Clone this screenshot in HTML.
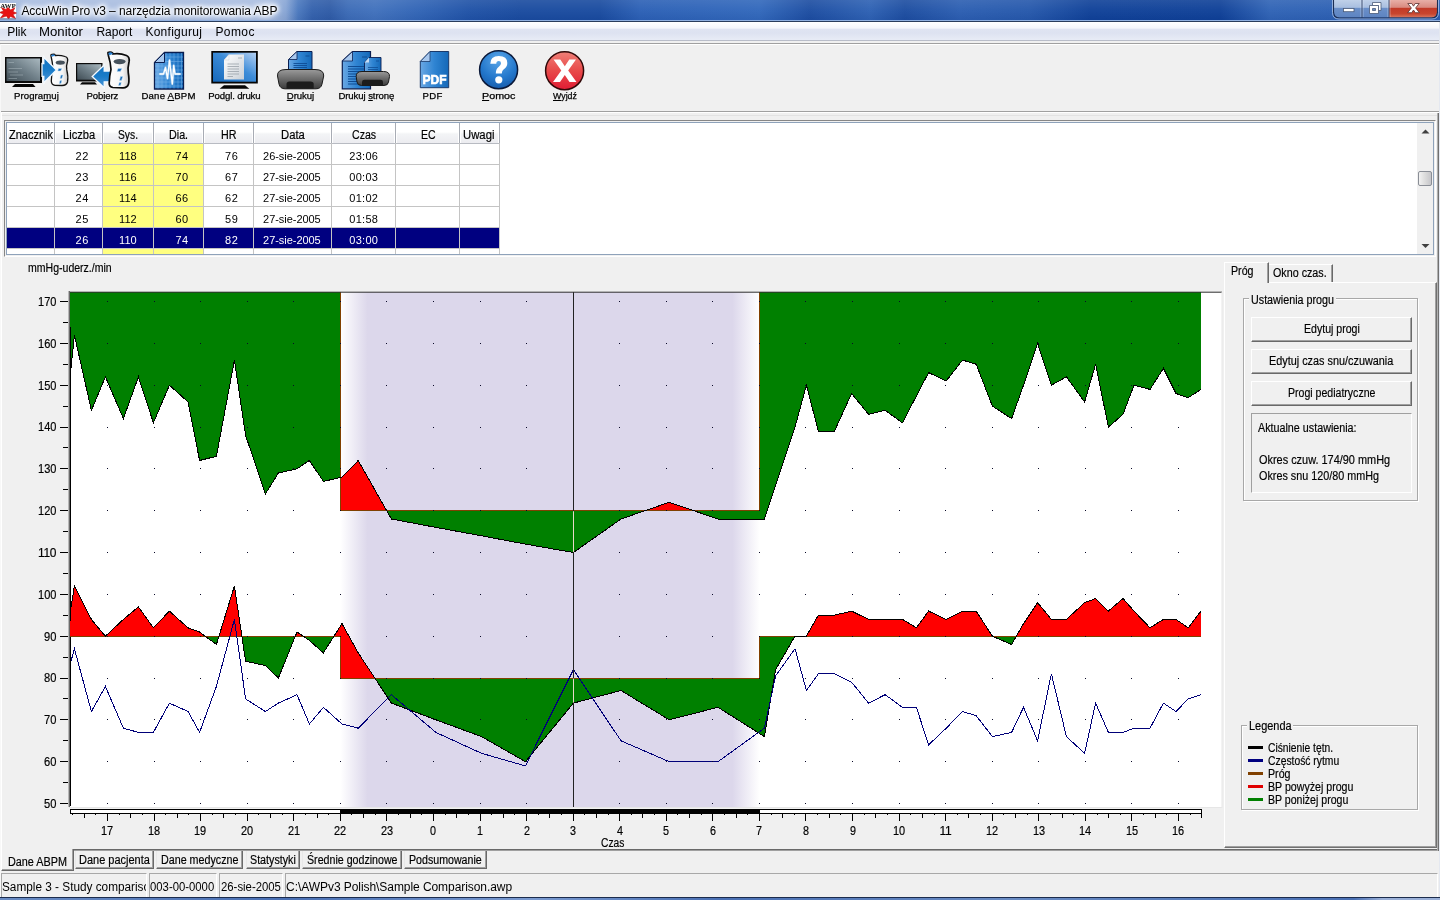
<!DOCTYPE html>
<html lang="pl"><head><meta charset="utf-8"><title>AccuWin Pro v3</title>
<style>
html,body{margin:0;padding:0}
body{width:1440px;height:900px;overflow:hidden;background:#f0f0f0;position:relative;font-family:"Liberation Sans",sans-serif;font-size:12px;color:#000}
.a{position:absolute;box-sizing:border-box}
.t{position:absolute;white-space:pre;display:block;transform-origin:0 0}
.t u{text-decoration:underline;text-underline-offset:1px}
#title{left:0;top:0;width:1440px;height:22px;background:
 linear-gradient(180deg,rgba(255,255,255,.10) 0,rgba(255,255,255,.04) 45%,rgba(0,0,40,.05) 100%),
 linear-gradient(90deg,#9db4da 0,#a9bde0 30px,#a9bde0 268px,#86a4d4 286px,#4a78be 298px,#3260ac 312px,#2d5aa6 330px,#3a6ab6 348px,#3f70bc 375px,#2f63b5 420px,#1e51a6 470px,#184a9f 520px,#184a9f 600px,#2a5fb5 640px,#3067bb 760px,#1b4ca1 810px,#2c60b3 870px,#1b4ca0 905px,#2a5db1 960px,#2457ab 1030px,#0e4098 1090px,#0d3f97 1220px,#2e62b5 1270px,#2b5fb3 1334px,#2a5db0 1440px)}
#title:after{content:"";position:absolute;left:0;top:20px;width:1440px;height:1px;background:#8fb0e0}
#title:before{content:"";position:absolute;left:0;top:21px;width:1440px;height:1px;background:#2a3d5c;z-index:2}
#menu{left:0;top:22px;width:1440px;height:18px;background:linear-gradient(180deg,#ffffff 0,#f4f6fb 6px,#dfe4f2 7.5px,#dde2f1 11px,#e8ecf6 18px)}
.hl{left:0;width:1440px;height:1px}
/* table */
#grid{left:6px;top:122px;width:1428px;height:133px;background:#fff;border:1px solid #8ea2ba}
.hc{top:123px;height:21px;background:linear-gradient(180deg,#ffffff 0,#ffffff 45%,#f3f4f6 55%,#ececf0 100%);border-right:1px solid #a8acb4;border-bottom:1px solid #b8bbc2;box-shadow:inset -1px 0 0 #fff, inset 1px 0 0 #fff}
.vl{width:1px;background:#c4c4c4;top:143px;height:111px}
.hline{height:1px;background:#c4c4c4;left:7px;width:493px}
.yl{background:#ffff80}
/* classic 3D */
.btn{background:#f0f0f0;border:1px solid;border-color:#fff #696969 #696969 #fff;box-shadow:inset -1px -1px 0 #a0a0a0}
.tabb{background:#f0f0f0;border:1px solid;border-color:#e3e3e3 #696969 #696969 #e3e3e3;box-shadow:inset 1px 1px 0 #fff, inset -1px -1px 0 #a0a0a0}
.grp{border:1px solid #a8a8a8;box-shadow:inset 1px 1px 0 #fff, 1px 1px 0 #fff}
.sunk{border:1px solid;border-color:#a0a0a0 #fff #fff #a0a0a0}
.sbp{top:873px;height:25px;border:1px solid;border-color:#a8a8a8 #fff #fff #a8a8a8}
</style></head><body>
<!-- title bar -->
<div id="title" class="a"></div>
<svg class="a" style="left:0;top:2px;will-change:transform" width="17" height="18" viewBox="0 0 17 18"><rect x="0" y="1" width="16" height="15.5" fill="#fff"/>
<path d="M8 5 L10.500 8 L15 5.500 L13 9.500 L16.500 11 L13 12.500 L15.500 16.500 L10.500 14.500 L8.500 17 L6.500 14 L0.500 16 L3.500 12 L-0.500 10.500 L3.500 9 L1 5 L6 7.500 Z" fill="#e81212" stroke="#c01010" stroke-width=".6"/>
<rect x="0" y="1" width="16" height="4.500" fill="#fff" opacity=".8"/>
<text x="0.200" y="6.400" font-family="Liberation Serif,serif" font-size="7" font-weight="700" fill="#111" textLength="15.600" lengthAdjust="spacingAndGlyphs">AWP</text>
<rect x="0" y="16.500" width="16" height="0.800" fill="#56688a"/></svg>
<svg class="a" style="left:1332px;top:0" width="108" height="20" viewBox="0 0 108 20">
<defs><linearGradient id="wc1" x1="0" y1="0" x2="0" y2="1"><stop offset="0" stop-color="#c3d3ea"/><stop offset=".45" stop-color="#a9bfe0"/><stop offset=".5" stop-color="#6b8fc8"/><stop offset="1" stop-color="#5d84c2"/></linearGradient>
<linearGradient id="wc2" x1="0" y1="0" x2="0" y2="1"><stop offset="0" stop-color="#eab4ac"/><stop offset=".45" stop-color="#d98a80"/><stop offset=".5" stop-color="#c23a28"/><stop offset=".8" stop-color="#c8452e"/><stop offset="1" stop-color="#d87860"/></linearGradient></defs>
<path d="M2 -1 V12 Q2 17.5 7.5 17.5 H57 V-1 Z" fill="url(#wc1)"/>
<path d="M57 -1 V17.5 H99.500 Q105 17.500 105 12 V-1 Z" fill="url(#wc2)"/>
<path d="M1.500 -1 V12 Q1.500 18 7.500 18 H99.500 Q105.500 18 105.500 12 V-1" fill="none" stroke="#1b2d52" stroke-width="1.100"/>
<path d="M0.500 -1 V12.500 Q0.500 19 7 19 H100 Q106.500 19 106.500 12.500 V-1" fill="none" stroke="#b9cdec" stroke-width="0.900" opacity=".8"/>
<path d="M30 0 V17.500 M57 0 V17.500" stroke="#1b2d52" stroke-width="1"/><path d="M31 0 V17 M58 0 V17 M29 0 V17 M56 0 V17" stroke="#dfe8f6" stroke-width="0.600" opacity=".7"/>
<rect x="11.500" y="8.500" width="10.500" height="3.200" fill="#fff" stroke="#4a5a78" stroke-width=".8"/>
<path d="M40.500 2.500 H49 V10.500 H46.500 V5.500 H40.500 Z" fill="#fff" stroke="#4a5a78" stroke-width=".8"/><path d="M37.500 5.500 H46.500 V13.500 H37.500 Z M40.500 8.500 V10.500 H43.500 V8.500 Z" fill="#fff" fill-rule="evenodd" stroke="#4a5a78" stroke-width=".8"/>
<path d="M75.800 3.500 L79.800 3.500 L81.500 6.200 L83.200 3.500 L87.200 3.500 L83.600 8 L87.400 12.700 L83.300 12.700 L81.500 10 L79.700 12.700 L75.600 12.700 L79.400 8 Z" fill="#fff" stroke="#5a3030" stroke-width=".8"/>
</svg>
<!-- menu -->
<div id="menu" class="a"></div>
<div class="a hl" style="top:40px;background:#b9bdc9"></div>
<div class="a hl" style="top:41px;background:#f0f0f0;height:2px"></div>
<div class="a hl" style="top:43px;background:#a0a0a0"></div>
<div class="a hl" style="top:44px;background:#fff"></div>
<!-- toolbar bottom -->
<div class="a hl" style="top:111px;background:#a0a0a0"></div>
<div class="a hl" style="top:112px;background:#fff"></div>
<svg class="a" style="left:0;top:46px;will-change:transform" width="620" height="46" viewBox="0 46 620 46">
<defs>
<linearGradient id="scr" x1="1" y1="0" x2="0" y2="1"><stop offset="0" stop-color="#a9b8bf"/><stop offset=".5" stop-color="#6f7f88"/><stop offset="1" stop-color="#3f4c54"/></linearGradient>
<linearGradient id="bl" x1="0" y1="0" x2="1" y2="0"><stop offset="0" stop-color="#6aa8e4"/><stop offset=".5" stop-color="#2f84d2"/><stop offset="1" stop-color="#1468b8"/></linearGradient>
<linearGradient id="bl2" x1="1" y1="0" x2="0" y2="1"><stop offset="0" stop-color="#b4d0f2"/><stop offset=".45" stop-color="#3d8cd8"/><stop offset="1" stop-color="#1668ba"/></linearGradient>
<linearGradient id="pr" x1="0" y1="0" x2="0" y2="1"><stop offset="0" stop-color="#9a9a9a"/><stop offset=".5" stop-color="#6a6a6a"/><stop offset="1" stop-color="#3c3c3c"/></linearGradient>
<linearGradient id="dev" x1="0" y1="0" x2="1" y2="0"><stop offset="0" stop-color="#fff"/><stop offset=".7" stop-color="#f4f4f4"/><stop offset="1" stop-color="#c8c8c8"/></linearGradient>
<linearGradient id="doc" x1="0" y1="0" x2="1" y2="1"><stop offset="0" stop-color="#fff"/><stop offset="1" stop-color="#c9cfd6"/></linearGradient>
<radialGradient id="hb" cx=".5" cy=".25" r=".8"><stop offset="0" stop-color="#5aa6e8"/><stop offset=".6" stop-color="#2478cc"/><stop offset="1" stop-color="#1558a8"/></radialGradient>
<linearGradient id="rd" x1="0" y1="0" x2="0" y2="1"><stop offset="0" stop-color="#f08078"/><stop offset=".5" stop-color="#e84a4a"/><stop offset="1" stop-color="#e01c34"/></linearGradient>
<linearGradient id="arr" x1="0" y1="0" x2="0" y2="1"><stop offset="0" stop-color="#1272c0"/><stop offset=".5" stop-color="#1a7cc8"/><stop offset="1" stop-color="#4a94d8"/></linearGradient>
</defs>
<!-- 1 Programuj -->
<rect x="5" y="57" width="37" height="26" fill="#0a0a0a"/><rect x="6.500" y="58.500" width="33.500" height="22.500" fill="url(#scr)"/>
<g stroke="#b8c4ca" stroke-width=".7" opacity=".6"><path d="M8.500 62.500 H14 M8.500 68.500 H22 M8.500 72 H18 M10 75 H23 M8.500 78.500 H17"/></g>
<path d="M12 87 L15 84 H33 L35.500 87 Z" fill="#050505"/>
<path d="M51 56 Q50.500 54.500 52 54.300 L54 54.200 Q55 54.300 55.300 55.500 Q60 54.800 65 56.500 Q68.500 57.500 67.500 61.500 Q66 66 66.800 70 Q68.500 77 67.500 82 Q66.500 85.500 62 85.500 L55 85.300 Q51.500 85 51.300 81 Q51.500 74 53 69 Q52.500 62 51 56 Z" fill="url(#dev)" stroke="#111" stroke-width="1.300"/>
<path d="M51.300 56 Q51 54.700 52.200 54.500 L54 54.400 Q55 54.600 55.200 55.600 L52 56.800 Z" fill="#2c84d6"/>
<ellipse cx="60.300" cy="62.600" rx="4.600" ry="2.200" fill="#46525c"/>
<path d="M58.500 68.500 H62 L60.500 71 H57.800 Z M61 75 H63 L61.800 78.500 H60 Z M60 80.500 H61.800 L61 83.500 H59.300 Z" fill="#1c6cb4" stroke="#bfe0fa" stroke-width=".5"/>
<path d="M42 63.500 H43.800 V57.200 L56.400 70 L43.800 82.800 V76.300 H42 Z" fill="url(#arr)" stroke="#f4faff" stroke-width="1.300" stroke-linejoin="miter"/><path d="M43.300 55.800 L44.600 57 M43.300 84.300 L44.600 83" stroke="#fff" stroke-width=".7"/>
<!-- 2 Pobierz -->
<rect x="76" y="63" width="26.500" height="18.500" fill="#0a0a0a"/><rect x="77.200" y="64.200" width="24" height="15.500" fill="url(#scr)"/>
<path d="M80 84.500 L82 82.300 H95 L97 84.500 Z" fill="#050505"/>
<path d="M111 71 H104.200 V65 L92.200 76.600 L104.200 87.800 V81.800 H111 Z" fill="url(#arr)" stroke="#f4faff" stroke-width="1.300"/>
<path d="M108 52.500 Q109.500 51.800 111.500 52.300 Q113 52.800 113 54 Q120 53 126.500 55.500 Q130 57 129 62 Q127.500 68 128.300 73 Q129.500 80 128.500 84 Q127.500 87.800 123 87.800 L113 87.500 Q109 87 109.200 83 Q109.500 75 111 69.500 Q110.500 62 108.500 56 Q107.800 53.500 108 52.500 Z" fill="url(#dev)" stroke="#0a0a0a" stroke-width="1.700"/>
<path d="M108.300 53 Q109.500 52 111.500 52.500 Q112.800 53 112.800 54 L109 55.500 Z" fill="#2c84d6"/>
<ellipse cx="119.600" cy="61.600" rx="6" ry="2.700" fill="#46525c"/>
<path d="M118 68.500 H122 L120.300 71.500 H117 Z M120.500 76.500 H122.800 L121.500 80.500 H119.500 Z M119.300 82.500 H121.300 L120.500 85.500 H118.500 Z" fill="#1c6cb4" stroke="#bfe0fa" stroke-width=".5"/>
<!-- 3 Dane ABPM -->
<path d="M164.500 52.500 H183.500 V89 H154.500 V62.500 Z" fill="url(#bl)" stroke="#0a1e50" stroke-width="1.300"/>
<g stroke="#8cc0f0" stroke-width=".6" opacity=".7"><path d="M158 63 V88.500 M162 59 V88.500 M166 53 V88.500 M170 53 V88.500 M174 53 V88.500 M178 53 V88.500 M181.500 53 V88.500 M155 66 H183 M155 70 H183 M155 74 H183 M155 78 H183 M155 82 H183 M155 86 H183 M164 57 H183 M160 61.500 H183"/></g>
<path d="M164.500 52.500 V62.500 H154.500 Z" fill="#a8c8ee" stroke="#0a1e50" stroke-width="1"/>
<path d="M160 74 H163.500 L165.500 67.500 L167.500 78.500 L169.500 60.200 L172.300 84 L173.700 65.500 L175 74 H180" fill="none" stroke="#dff2ff" stroke-width="2.400" stroke-linejoin="round" stroke-linecap="round" opacity=".45"/><path d="M160 74 H163.500 L165.500 67.500 L167.500 78.500 L169.500 60.200 L172.300 84 L173.700 65.500 L175 74 H180" fill="none" stroke="#fff" stroke-width="1.300" stroke-linejoin="round" stroke-linecap="round"/>
<!-- 4 Podgl druku -->
<rect x="211.300" y="51" width="46.500" height="32.500" fill="#050505"/><rect x="213" y="52.700" width="43" height="29" fill="url(#bl2)"/>
<path d="M229 54.500 H244 V79.500 H224 V60 Z" fill="url(#doc)"/><path d="M229 54.500 V60 H224 Z" fill="#f4f6f8" stroke="#c0c6cc" stroke-width=".4"/>
<g stroke="#9aa2aa" stroke-width=".8"><path d="M227.500 64 H239 M227.500 66.500 H239 M227.500 69 H239 M227.500 71.500 H239 M227.500 74 H239 M227.500 76.500 H233 M238 58 H242"/></g>
<path d="M219.600 88.800 L224 85.300 H245 L249.300 88.800 Z" fill="#050505"/>
<!-- 5 Drukuj -->
<path d="M297 51.500 H312 V71 H288.500 V59.500 Z" fill="url(#bl)" stroke="#0a1e50" stroke-width="1"/><path d="M297 51.500 V59.500 H288.500 Z" fill="#a8c8ee" stroke="#0a1e50" stroke-width=".8"/>
<g stroke="#0f4c94" stroke-width=".9"><path d="M293.500 63.500 H307 M293.500 65.500 H307 M293.500 67.500 H307 M305.500 56 H309.500"/></g>
<path d="M277.500 76 Q277 69.500 286 69.500 H315 Q324 69.500 323.700 76 L322 84 Q321 88.800 316 88.800 H285 Q280 88.800 279 84 Z" fill="url(#pr)" stroke="#1a1a1a" stroke-width="1"/>
<path d="M286.500 88.800 V84 Q286.500 81.500 289.500 81.500 H310.500 Q313.700 81.500 313.700 84 V88.800 Z" fill="#1c1c1c"/>
<!-- 6 Drukuj strone -->
<path d="M352.500 51.500 H370.500 V88.800 H342.300 V61 Z" fill="url(#bl)" stroke="#0a1e50" stroke-width="1.200"/><path d="M352.500 51.500 V61 H342.300 Z" fill="#a8c8ee" stroke="#0a1e50" stroke-width=".8"/>
<g stroke="#0f4c94" stroke-width="1"><path d="M348 66.500 H365 M348 69 H365 M348 71.500 H365 M348 74 H365 M348 76.500 H365 M348 79 H365 M348 81.500 H365 M348 84 H362 M362 57 H367"/></g>
<path d="M369 57.500 H381 V73 H364.500 V62.500 Z" fill="url(#bl)" stroke="#0a1e50" stroke-width=".9"/><path d="M369 57.500 V62.500 H364.500 Z" fill="#c8dcf4"/>
<g stroke="#0f4c94" stroke-width=".8"><path d="M368 67.500 H378 M368 69.500 H378 M376 61 H379"/></g>
<path d="M356.200 76.500 Q356 71.500 362 71.500 H383.500 Q389.800 71.500 389.500 76.500 L388.500 82 Q388 85.500 384 85.500 H361.500 Q357.500 85.500 357 82 Z" fill="url(#pr)" stroke="#1a1a1a" stroke-width="1"/>
<path d="M362 85.500 V82 Q362 79.800 364.500 79.800 H380.500 Q383 79.800 383 82 V85.500 Z" fill="#1c1c1c"/>
<!-- 7 PDF -->
<path d="M430 51.500 H448.700 V87.700 H420.300 V61.500 Z" fill="url(#bl)" stroke="#1a3a6a" stroke-width="1"/><path d="M430 51.500 V61.500 H420.300 Z" fill="#a8c8ee" stroke="#1a3a6a" stroke-width=".8"/>
<text x="422.600" y="83.800" font-family="Liberation Sans,sans-serif" font-weight="700" font-size="13.500" fill="#fff" stroke="#fff" stroke-width=".7" textLength="24" lengthAdjust="spacingAndGlyphs">PDF</text>
<!-- 8 Pomoc -->
<circle cx="498.600" cy="69.700" r="19" fill="url(#hb)" stroke="#0a1838" stroke-width="1.500"/>
<path d="M490.300 63.800 Q490.300 56 498.800 56 Q507.300 56 507.300 63 Q507.300 67 503.800 69.300 Q501.800 70.700 501.800 73.500 H495.800 Q495.800 69 498.800 66.800 Q501 65.200 501 63.300 Q501 61 498.800 61 Q496.300 61 496.300 63.800 Z" fill="#fff"/><circle cx="498.800" cy="79.800" r="3.600" fill="#fff"/>
<!-- 9 Wyjdz -->
<circle cx="564.600" cy="70.700" r="19" fill="url(#rd)" stroke="#300808" stroke-width="1.500"/>
<path d="M553.500 59.500 H560.300 L564.800 66.300 L569.300 59.500 H576 L568.200 70.500 L576.500 82 H569.500 L564.800 75 L560 82 H553 L561.300 70.500 Z" fill="#fff"/>
</svg>
<div class="a" style="left:1px;top:115px;width:1437px;height:1px;background:#e3e3e3"></div><div class="a" style="left:0;top:44px;width:1px;height:854px;background:#f8f8f8"></div>
<!-- table -->
<div class="a" style="left:4px;top:120px;width:1432px;height:137px;border:1px solid;border-color:#868686 #fff #fff #868686"></div><div id="grid" class="a"></div>
<div class="a hc" style="left:7px;width:48px"></div>
<div class="a hc" style="left:55px;width:48px"></div>
<div class="a hc" style="left:103px;width:51px"></div>
<div class="a hc" style="left:154px;width:50px"></div>
<div class="a hc" style="left:204px;width:50px"></div>
<div class="a hc" style="left:254px;width:78px"></div>
<div class="a hc" style="left:332px;width:64px"></div>
<div class="a hc" style="left:396px;width:64px"></div>
<div class="a hc" style="left:460px;width:40px"></div>
<div class="a yl" style="left:103px;top:144px;width:50px;height:84px"></div>
<div class="a yl" style="left:103px;top:249px;width:50px;height:5px"></div>
<div class="a yl" style="left:154px;top:144px;width:49px;height:84px"></div>
<div class="a yl" style="left:154px;top:249px;width:49px;height:5px"></div>
<div class="a hline" style="top:164px"></div>
<div class="a hline" style="top:185px"></div>
<div class="a hline" style="top:206px"></div>
<div class="a hline" style="top:227px"></div>
<div class="a hline" style="top:248px"></div>
<div class="a" style="left:7px;top:228px;width:493px;height:20px;background:#000080"></div>
<div class="a vl" style="left:54px"></div>
<div class="a vl" style="left:102px"></div>
<div class="a vl" style="left:153px"></div>
<div class="a vl" style="left:203px"></div>
<div class="a vl" style="left:253px"></div>
<div class="a vl" style="left:331px"></div>
<div class="a vl" style="left:395px"></div>
<div class="a vl" style="left:459px"></div>
<div class="a vl" style="left:499px"></div>
<div class="a" style="left:1417px;top:123px;width:16px;height:131px;background:#f0f0f0"></div>
<svg class="a" style="left:1417px;top:123px" width="17" height="131" viewBox="0 0 17 131"><defs><linearGradient id="th" x1="0" x2="1"><stop offset="0" stop-color="#f4f4f4"/><stop offset=".5" stop-color="#dcdcdc"/><stop offset="1" stop-color="#c4c4c8"/></linearGradient></defs>
<path d="M4.500 10.500 L8.500 6.500 L12.500 10.500 Z" fill="#404040"/><path d="M4.500 121 L8.500 125 L12.500 121 Z" fill="#404040"/>
<rect x="1.500" y="48.500" width="13" height="14" rx="1.500" fill="url(#th)" stroke="#8a8e96" stroke-width="1"/></svg>
<!-- chart -->
<svg width="1440" height="900" viewBox="0 0 1440 900" style="position:absolute;left:0;top:0" shape-rendering="auto"><defs><clipPath id="plot"><rect x="70" y="292" width="1131.5" height="515"/></clipPath><linearGradient id="ng" x1="0" x2="1" y1="0" y2="0"><stop offset="0" stop-color="#fff"/><stop offset="0.0646" stop-color="#dcd7eb"/><stop offset="0.9354" stop-color="#dcd7eb"/><stop offset="1" stop-color="#fff"/></linearGradient></defs><rect x="69" y="292" width="1153" height="515" fill="#fff"/><rect x="69" y="807" width="1153" height="1" fill="#e6e6e6"/><rect x="340.5" y="292" width="419.0" height="515" fill="url(#ng)"/><rect x="70" y="292" width="1" height="514" fill="#000"/><clipPath id="abs"><polygon points="70.0,-100.0 1201.0,-100.0 1201.0,284.8 759.5,284.8 759.5,510.7 340.5,510.7 340.5,284.8 70.0,284.8"/></clipPath><clipPath id="bes"><polygon points="70.0,2000.0 1201.0,2000.0 1201.0,284.8 759.5,284.8 759.5,510.7 340.5,510.7 340.5,284.8 70.0,284.8"/></clipPath><g clip-path="url(#plot)" shape-rendering="crispEdges"><g clip-path="url(#abs)"><polygon points="71.0,368.4 74.4,335.0 91.4,410.3 105.4,376.8 123.4,418.6 138.4,376.8 153.4,422.8 169.4,385.2 188.0,401.9 199.6,460.5 216.4,456.3 234.4,360.1 245.6,435.4 265.4,493.9 278.4,473.0 297.0,468.8 309.4,460.5 323.4,481.4 342.0,477.2 358.2,460.5 391.4,519.0 435.9,527.4 481.5,535.8 525.4,544.1 573.4,552.5 621.0,519.0 669.2,502.3 718.0,519.0 764.4,519.0 775.6,485.6 795.0,427.0 806.4,385.2 818.4,431.2 834.4,431.2 851.6,393.5 868.6,414.4 885.2,410.3 902.4,422.8 916.4,396.0 928.6,372.6 946.2,381.0 962.5,360.1 976.2,364.2 992.4,406.1 1011.6,418.6 1023.5,385.2 1037.6,343.3 1051.4,385.2 1066.4,376.8 1084.6,401.9 1095.6,364.2 1108.4,427.0 1123.0,414.4 1134.0,385.2 1150.0,389.4 1163.4,368.4 1176.0,393.5 1188.2,397.7 1201.0,389.4 1201.0,284.8 759.5,284.8 759.5,510.7 340.5,510.7 340.5,284.8 70.0,284.8" fill="#ff0000"/></g><g clip-path="url(#bes)"><polygon points="71.0,368.4 74.4,335.0 91.4,410.3 105.4,376.8 123.4,418.6 138.4,376.8 153.4,422.8 169.4,385.2 188.0,401.9 199.6,460.5 216.4,456.3 234.4,360.1 245.6,435.4 265.4,493.9 278.4,473.0 297.0,468.8 309.4,460.5 323.4,481.4 342.0,477.2 358.2,460.5 391.4,519.0 435.9,527.4 481.5,535.8 525.4,544.1 573.4,552.5 621.0,519.0 669.2,502.3 718.0,519.0 764.4,519.0 775.6,485.6 795.0,427.0 806.4,385.2 818.4,431.2 834.4,431.2 851.6,393.5 868.6,414.4 885.2,410.3 902.4,422.8 916.4,396.0 928.6,372.6 946.2,381.0 962.5,360.1 976.2,364.2 992.4,406.1 1011.6,418.6 1023.5,385.2 1037.6,343.3 1051.4,385.2 1066.4,376.8 1084.6,401.9 1095.6,364.2 1108.4,427.0 1123.0,414.4 1134.0,385.2 1150.0,389.4 1163.4,368.4 1176.0,393.5 1188.2,397.7 1201.0,389.4 1201.0,284.8 759.5,284.8 759.5,510.7 340.5,510.7 340.5,284.8 70.0,284.8" fill="#008000"/></g><polyline points="70.0,284.8 340.5,284.8 340.5,510.7 759.5,510.7 759.5,284.8 1201.0,284.8" fill="none" stroke="#804000" stroke-width="1"/><polyline points="71.0,368.4 74.4,335.0 91.4,410.3 105.4,376.8 123.4,418.6 138.4,376.8 153.4,422.8 169.4,385.2 188.0,401.9 199.6,460.5 216.4,456.3 234.4,360.1 245.6,435.4 265.4,493.9 278.4,473.0 297.0,468.8 309.4,460.5 323.4,481.4 342.0,477.2 358.2,460.5 391.4,519.0 435.9,527.4 481.5,535.8 525.4,544.1 573.4,552.5 621.0,519.0 669.2,502.3 718.0,519.0 764.4,519.0 775.6,485.6 795.0,427.0 806.4,385.2 818.4,431.2 834.4,431.2 851.6,393.5 868.6,414.4 885.2,410.3 902.4,422.8 916.4,396.0 928.6,372.6 946.2,381.0 962.5,360.1 976.2,364.2 992.4,406.1 1011.6,418.6 1023.5,385.2 1037.6,343.3 1051.4,385.2 1066.4,376.8 1084.6,401.9 1095.6,364.2 1108.4,427.0 1123.0,414.4 1134.0,385.2 1150.0,389.4 1163.4,368.4 1176.0,393.5 1188.2,397.7 1201.0,389.4" fill="none" stroke="#000" stroke-width="1"/></g><clipPath id="abd"><polygon points="70.0,-100.0 1201.0,-100.0 1201.0,636.2 759.5,636.2 759.5,678.0 340.5,678.0 340.5,636.2 70.0,636.2"/></clipPath><clipPath id="bed"><polygon points="70.0,2000.0 1201.0,2000.0 1201.0,636.2 759.5,636.2 759.5,678.0 340.5,678.0 340.5,636.2 70.0,636.2"/></clipPath><g clip-path="url(#plot)" shape-rendering="crispEdges"><g clip-path="url(#abd)"><polygon points="71.0,606.9 74.4,586.0 91.4,619.4 105.4,636.2 123.4,619.4 138.4,606.9 153.4,627.8 169.4,611.1 188.0,627.8 199.6,632.0 216.4,644.5 234.4,586.0 245.6,661.3 265.4,665.5 278.4,678.0 297.0,632.0 309.4,640.4 323.4,652.9 342.0,623.6 358.2,652.9 391.4,703.1 435.9,719.8 481.5,736.6 525.4,761.7 573.4,703.1 621.0,690.5 669.2,719.8 718.0,707.3 764.4,736.6 775.6,669.6 795.0,636.2 806.4,636.2 818.4,615.2 834.4,615.2 851.6,611.1 868.6,619.4 885.2,619.4 902.4,619.4 916.4,627.8 928.6,611.1 946.2,619.4 962.5,611.1 976.2,611.1 992.4,636.2 1011.6,644.5 1023.5,623.6 1037.6,602.7 1051.4,619.4 1066.4,619.4 1084.6,602.7 1095.6,598.5 1108.4,611.1 1123.0,598.5 1134.0,611.1 1150.0,627.8 1163.4,619.4 1176.0,619.4 1188.2,627.8 1201.0,611.1 1201.0,636.2 759.5,636.2 759.5,678.0 340.5,678.0 340.5,636.2 70.0,636.2" fill="#ff0000"/></g><g clip-path="url(#bed)"><polygon points="71.0,606.9 74.4,586.0 91.4,619.4 105.4,636.2 123.4,619.4 138.4,606.9 153.4,627.8 169.4,611.1 188.0,627.8 199.6,632.0 216.4,644.5 234.4,586.0 245.6,661.3 265.4,665.5 278.4,678.0 297.0,632.0 309.4,640.4 323.4,652.9 342.0,623.6 358.2,652.9 391.4,703.1 435.9,719.8 481.5,736.6 525.4,761.7 573.4,703.1 621.0,690.5 669.2,719.8 718.0,707.3 764.4,736.6 775.6,669.6 795.0,636.2 806.4,636.2 818.4,615.2 834.4,615.2 851.6,611.1 868.6,619.4 885.2,619.4 902.4,619.4 916.4,627.8 928.6,611.1 946.2,619.4 962.5,611.1 976.2,611.1 992.4,636.2 1011.6,644.5 1023.5,623.6 1037.6,602.7 1051.4,619.4 1066.4,619.4 1084.6,602.7 1095.6,598.5 1108.4,611.1 1123.0,598.5 1134.0,611.1 1150.0,627.8 1163.4,619.4 1176.0,619.4 1188.2,627.8 1201.0,611.1 1201.0,636.2 759.5,636.2 759.5,678.0 340.5,678.0 340.5,636.2 70.0,636.2" fill="#008000"/></g><polyline points="70.0,636.2 340.5,636.2 340.5,678.0 759.5,678.0 759.5,636.2 1201.0,636.2" fill="none" stroke="#804000" stroke-width="1"/><polyline points="71.0,606.9 74.4,586.0 91.4,619.4 105.4,636.2 123.4,619.4 138.4,606.9 153.4,627.8 169.4,611.1 188.0,627.8 199.6,632.0 216.4,644.5 234.4,586.0 245.6,661.3 265.4,665.5 278.4,678.0 297.0,632.0 309.4,640.4 323.4,652.9 342.0,623.6 358.2,652.9 391.4,703.1 435.9,719.8 481.5,736.6 525.4,761.7 573.4,703.1 621.0,690.5 669.2,719.8 718.0,707.3 764.4,736.6 775.6,669.6 795.0,636.2 806.4,636.2 818.4,615.2 834.4,615.2 851.6,611.1 868.6,619.4 885.2,619.4 902.4,619.4 916.4,627.8 928.6,611.1 946.2,619.4 962.5,611.1 976.2,611.1 992.4,636.2 1011.6,644.5 1023.5,623.6 1037.6,602.7 1051.4,619.4 1066.4,619.4 1084.6,602.7 1095.6,598.5 1108.4,611.1 1123.0,598.5 1134.0,611.1 1150.0,627.8 1163.4,619.4 1176.0,619.4 1188.2,627.8 1201.0,611.1" fill="none" stroke="#000" stroke-width="1"/></g><polyline points="71.0,661.3 74.4,648.7 91.4,711.5 105.4,686.4 123.4,728.2 138.4,732.4 153.4,732.4 169.4,703.1 188.0,711.5 199.6,732.4 216.4,686.4 234.4,619.4 245.6,698.9 265.4,711.5 278.4,703.1 297.0,694.7 309.4,724.0 323.4,707.3 342.0,724.0 358.2,728.2 391.4,694.7 435.9,732.4 481.5,753.3 525.4,765.9 573.4,669.6 621.0,740.8 669.2,761.7 718.0,761.7 764.4,728.2 775.6,675.9 795.0,648.7 806.4,690.5 818.4,673.8 834.4,673.8 851.6,682.2 868.6,703.1 885.2,694.7 902.4,707.3 916.4,707.3 928.6,744.9 946.2,728.2 962.5,711.5 976.2,715.7 992.4,736.6 1011.6,732.4 1023.5,707.3 1037.6,740.8 1051.4,673.8 1066.4,736.6 1084.6,753.3 1095.6,703.1 1108.4,732.4 1123.0,732.4 1134.0,728.2 1150.0,728.2 1163.4,703.1 1176.0,711.5 1188.2,698.9 1201.0,694.7" fill="none" stroke="#000078" stroke-width="1" shape-rendering="crispEdges"/><g fill="#0a0a28" shape-rendering="crispEdges"><rect x="107" y="803" width="1" height="1"/><rect x="107" y="761" width="1" height="1"/><rect x="107" y="719" width="1" height="1"/><rect x="107" y="678" width="1" height="1"/><rect x="107" y="636" width="1" height="1"/><rect x="107" y="594" width="1" height="1"/><rect x="107" y="552" width="1" height="1"/><rect x="107" y="510" width="1" height="1"/><rect x="107" y="468" width="1" height="1"/><rect x="107" y="427" width="1" height="1"/><rect x="107" y="385" width="1" height="1"/><rect x="107" y="343" width="1" height="1"/><rect x="107" y="301" width="1" height="1"/><rect x="154" y="803" width="1" height="1"/><rect x="154" y="761" width="1" height="1"/><rect x="154" y="719" width="1" height="1"/><rect x="154" y="678" width="1" height="1"/><rect x="154" y="636" width="1" height="1"/><rect x="154" y="594" width="1" height="1"/><rect x="154" y="552" width="1" height="1"/><rect x="154" y="510" width="1" height="1"/><rect x="154" y="468" width="1" height="1"/><rect x="154" y="427" width="1" height="1"/><rect x="154" y="385" width="1" height="1"/><rect x="154" y="343" width="1" height="1"/><rect x="154" y="301" width="1" height="1"/><rect x="200" y="803" width="1" height="1"/><rect x="200" y="761" width="1" height="1"/><rect x="200" y="719" width="1" height="1"/><rect x="200" y="678" width="1" height="1"/><rect x="200" y="636" width="1" height="1"/><rect x="200" y="594" width="1" height="1"/><rect x="200" y="552" width="1" height="1"/><rect x="200" y="510" width="1" height="1"/><rect x="200" y="468" width="1" height="1"/><rect x="200" y="427" width="1" height="1"/><rect x="200" y="385" width="1" height="1"/><rect x="200" y="343" width="1" height="1"/><rect x="200" y="301" width="1" height="1"/><rect x="247" y="803" width="1" height="1"/><rect x="247" y="761" width="1" height="1"/><rect x="247" y="719" width="1" height="1"/><rect x="247" y="678" width="1" height="1"/><rect x="247" y="636" width="1" height="1"/><rect x="247" y="594" width="1" height="1"/><rect x="247" y="552" width="1" height="1"/><rect x="247" y="510" width="1" height="1"/><rect x="247" y="468" width="1" height="1"/><rect x="247" y="427" width="1" height="1"/><rect x="247" y="385" width="1" height="1"/><rect x="247" y="343" width="1" height="1"/><rect x="247" y="301" width="1" height="1"/><rect x="293" y="803" width="1" height="1"/><rect x="293" y="761" width="1" height="1"/><rect x="293" y="719" width="1" height="1"/><rect x="293" y="678" width="1" height="1"/><rect x="293" y="636" width="1" height="1"/><rect x="293" y="594" width="1" height="1"/><rect x="293" y="552" width="1" height="1"/><rect x="293" y="510" width="1" height="1"/><rect x="293" y="468" width="1" height="1"/><rect x="293" y="427" width="1" height="1"/><rect x="293" y="385" width="1" height="1"/><rect x="293" y="343" width="1" height="1"/><rect x="293" y="301" width="1" height="1"/><rect x="340" y="803" width="1" height="1"/><rect x="340" y="761" width="1" height="1"/><rect x="340" y="719" width="1" height="1"/><rect x="340" y="678" width="1" height="1"/><rect x="340" y="636" width="1" height="1"/><rect x="340" y="594" width="1" height="1"/><rect x="340" y="552" width="1" height="1"/><rect x="340" y="510" width="1" height="1"/><rect x="340" y="468" width="1" height="1"/><rect x="340" y="427" width="1" height="1"/><rect x="340" y="385" width="1" height="1"/><rect x="340" y="343" width="1" height="1"/><rect x="340" y="301" width="1" height="1"/><rect x="386" y="803" width="1" height="1"/><rect x="386" y="761" width="1" height="1"/><rect x="386" y="719" width="1" height="1"/><rect x="386" y="678" width="1" height="1"/><rect x="386" y="636" width="1" height="1"/><rect x="386" y="594" width="1" height="1"/><rect x="386" y="552" width="1" height="1"/><rect x="386" y="510" width="1" height="1"/><rect x="386" y="468" width="1" height="1"/><rect x="386" y="427" width="1" height="1"/><rect x="386" y="385" width="1" height="1"/><rect x="386" y="343" width="1" height="1"/><rect x="386" y="301" width="1" height="1"/><rect x="433" y="803" width="1" height="1"/><rect x="433" y="761" width="1" height="1"/><rect x="433" y="719" width="1" height="1"/><rect x="433" y="678" width="1" height="1"/><rect x="433" y="636" width="1" height="1"/><rect x="433" y="594" width="1" height="1"/><rect x="433" y="552" width="1" height="1"/><rect x="433" y="510" width="1" height="1"/><rect x="433" y="468" width="1" height="1"/><rect x="433" y="427" width="1" height="1"/><rect x="433" y="385" width="1" height="1"/><rect x="433" y="343" width="1" height="1"/><rect x="433" y="301" width="1" height="1"/><rect x="480" y="803" width="1" height="1"/><rect x="480" y="761" width="1" height="1"/><rect x="480" y="719" width="1" height="1"/><rect x="480" y="678" width="1" height="1"/><rect x="480" y="636" width="1" height="1"/><rect x="480" y="594" width="1" height="1"/><rect x="480" y="552" width="1" height="1"/><rect x="480" y="510" width="1" height="1"/><rect x="480" y="468" width="1" height="1"/><rect x="480" y="427" width="1" height="1"/><rect x="480" y="385" width="1" height="1"/><rect x="480" y="343" width="1" height="1"/><rect x="480" y="301" width="1" height="1"/><rect x="526" y="803" width="1" height="1"/><rect x="526" y="761" width="1" height="1"/><rect x="526" y="719" width="1" height="1"/><rect x="526" y="678" width="1" height="1"/><rect x="526" y="636" width="1" height="1"/><rect x="526" y="594" width="1" height="1"/><rect x="526" y="552" width="1" height="1"/><rect x="526" y="510" width="1" height="1"/><rect x="526" y="468" width="1" height="1"/><rect x="526" y="427" width="1" height="1"/><rect x="526" y="385" width="1" height="1"/><rect x="526" y="343" width="1" height="1"/><rect x="526" y="301" width="1" height="1"/><rect x="573" y="803" width="1" height="1"/><rect x="573" y="761" width="1" height="1"/><rect x="573" y="719" width="1" height="1"/><rect x="573" y="678" width="1" height="1"/><rect x="573" y="636" width="1" height="1"/><rect x="573" y="594" width="1" height="1"/><rect x="573" y="552" width="1" height="1"/><rect x="573" y="510" width="1" height="1"/><rect x="573" y="468" width="1" height="1"/><rect x="573" y="427" width="1" height="1"/><rect x="573" y="385" width="1" height="1"/><rect x="573" y="343" width="1" height="1"/><rect x="573" y="301" width="1" height="1"/><rect x="619" y="803" width="1" height="1"/><rect x="619" y="761" width="1" height="1"/><rect x="619" y="719" width="1" height="1"/><rect x="619" y="678" width="1" height="1"/><rect x="619" y="636" width="1" height="1"/><rect x="619" y="594" width="1" height="1"/><rect x="619" y="552" width="1" height="1"/><rect x="619" y="510" width="1" height="1"/><rect x="619" y="468" width="1" height="1"/><rect x="619" y="427" width="1" height="1"/><rect x="619" y="385" width="1" height="1"/><rect x="619" y="343" width="1" height="1"/><rect x="619" y="301" width="1" height="1"/><rect x="666" y="803" width="1" height="1"/><rect x="666" y="761" width="1" height="1"/><rect x="666" y="719" width="1" height="1"/><rect x="666" y="678" width="1" height="1"/><rect x="666" y="636" width="1" height="1"/><rect x="666" y="594" width="1" height="1"/><rect x="666" y="552" width="1" height="1"/><rect x="666" y="510" width="1" height="1"/><rect x="666" y="468" width="1" height="1"/><rect x="666" y="427" width="1" height="1"/><rect x="666" y="385" width="1" height="1"/><rect x="666" y="343" width="1" height="1"/><rect x="666" y="301" width="1" height="1"/><rect x="712" y="803" width="1" height="1"/><rect x="712" y="761" width="1" height="1"/><rect x="712" y="719" width="1" height="1"/><rect x="712" y="678" width="1" height="1"/><rect x="712" y="636" width="1" height="1"/><rect x="712" y="594" width="1" height="1"/><rect x="712" y="552" width="1" height="1"/><rect x="712" y="510" width="1" height="1"/><rect x="712" y="468" width="1" height="1"/><rect x="712" y="427" width="1" height="1"/><rect x="712" y="385" width="1" height="1"/><rect x="712" y="343" width="1" height="1"/><rect x="712" y="301" width="1" height="1"/><rect x="759" y="803" width="1" height="1"/><rect x="759" y="761" width="1" height="1"/><rect x="759" y="719" width="1" height="1"/><rect x="759" y="678" width="1" height="1"/><rect x="759" y="636" width="1" height="1"/><rect x="759" y="594" width="1" height="1"/><rect x="759" y="552" width="1" height="1"/><rect x="759" y="510" width="1" height="1"/><rect x="759" y="468" width="1" height="1"/><rect x="759" y="427" width="1" height="1"/><rect x="759" y="385" width="1" height="1"/><rect x="759" y="343" width="1" height="1"/><rect x="759" y="301" width="1" height="1"/><rect x="805" y="803" width="1" height="1"/><rect x="805" y="761" width="1" height="1"/><rect x="805" y="719" width="1" height="1"/><rect x="805" y="678" width="1" height="1"/><rect x="805" y="636" width="1" height="1"/><rect x="805" y="594" width="1" height="1"/><rect x="805" y="552" width="1" height="1"/><rect x="805" y="510" width="1" height="1"/><rect x="805" y="468" width="1" height="1"/><rect x="805" y="427" width="1" height="1"/><rect x="805" y="385" width="1" height="1"/><rect x="805" y="343" width="1" height="1"/><rect x="805" y="301" width="1" height="1"/><rect x="852" y="803" width="1" height="1"/><rect x="852" y="761" width="1" height="1"/><rect x="852" y="719" width="1" height="1"/><rect x="852" y="678" width="1" height="1"/><rect x="852" y="636" width="1" height="1"/><rect x="852" y="594" width="1" height="1"/><rect x="852" y="552" width="1" height="1"/><rect x="852" y="510" width="1" height="1"/><rect x="852" y="468" width="1" height="1"/><rect x="852" y="427" width="1" height="1"/><rect x="852" y="385" width="1" height="1"/><rect x="852" y="343" width="1" height="1"/><rect x="852" y="301" width="1" height="1"/><rect x="899" y="803" width="1" height="1"/><rect x="899" y="761" width="1" height="1"/><rect x="899" y="719" width="1" height="1"/><rect x="899" y="678" width="1" height="1"/><rect x="899" y="636" width="1" height="1"/><rect x="899" y="594" width="1" height="1"/><rect x="899" y="552" width="1" height="1"/><rect x="899" y="510" width="1" height="1"/><rect x="899" y="468" width="1" height="1"/><rect x="899" y="427" width="1" height="1"/><rect x="899" y="385" width="1" height="1"/><rect x="899" y="343" width="1" height="1"/><rect x="899" y="301" width="1" height="1"/><rect x="945" y="803" width="1" height="1"/><rect x="945" y="761" width="1" height="1"/><rect x="945" y="719" width="1" height="1"/><rect x="945" y="678" width="1" height="1"/><rect x="945" y="636" width="1" height="1"/><rect x="945" y="594" width="1" height="1"/><rect x="945" y="552" width="1" height="1"/><rect x="945" y="510" width="1" height="1"/><rect x="945" y="468" width="1" height="1"/><rect x="945" y="427" width="1" height="1"/><rect x="945" y="385" width="1" height="1"/><rect x="945" y="343" width="1" height="1"/><rect x="945" y="301" width="1" height="1"/><rect x="992" y="803" width="1" height="1"/><rect x="992" y="761" width="1" height="1"/><rect x="992" y="719" width="1" height="1"/><rect x="992" y="678" width="1" height="1"/><rect x="992" y="636" width="1" height="1"/><rect x="992" y="594" width="1" height="1"/><rect x="992" y="552" width="1" height="1"/><rect x="992" y="510" width="1" height="1"/><rect x="992" y="468" width="1" height="1"/><rect x="992" y="427" width="1" height="1"/><rect x="992" y="385" width="1" height="1"/><rect x="992" y="343" width="1" height="1"/><rect x="992" y="301" width="1" height="1"/><rect x="1038" y="803" width="1" height="1"/><rect x="1038" y="761" width="1" height="1"/><rect x="1038" y="719" width="1" height="1"/><rect x="1038" y="678" width="1" height="1"/><rect x="1038" y="636" width="1" height="1"/><rect x="1038" y="594" width="1" height="1"/><rect x="1038" y="552" width="1" height="1"/><rect x="1038" y="510" width="1" height="1"/><rect x="1038" y="468" width="1" height="1"/><rect x="1038" y="427" width="1" height="1"/><rect x="1038" y="385" width="1" height="1"/><rect x="1038" y="343" width="1" height="1"/><rect x="1038" y="301" width="1" height="1"/><rect x="1085" y="803" width="1" height="1"/><rect x="1085" y="761" width="1" height="1"/><rect x="1085" y="719" width="1" height="1"/><rect x="1085" y="678" width="1" height="1"/><rect x="1085" y="636" width="1" height="1"/><rect x="1085" y="594" width="1" height="1"/><rect x="1085" y="552" width="1" height="1"/><rect x="1085" y="510" width="1" height="1"/><rect x="1085" y="468" width="1" height="1"/><rect x="1085" y="427" width="1" height="1"/><rect x="1085" y="385" width="1" height="1"/><rect x="1085" y="343" width="1" height="1"/><rect x="1085" y="301" width="1" height="1"/><rect x="1131" y="803" width="1" height="1"/><rect x="1131" y="761" width="1" height="1"/><rect x="1131" y="719" width="1" height="1"/><rect x="1131" y="678" width="1" height="1"/><rect x="1131" y="636" width="1" height="1"/><rect x="1131" y="594" width="1" height="1"/><rect x="1131" y="552" width="1" height="1"/><rect x="1131" y="510" width="1" height="1"/><rect x="1131" y="468" width="1" height="1"/><rect x="1131" y="427" width="1" height="1"/><rect x="1131" y="385" width="1" height="1"/><rect x="1131" y="343" width="1" height="1"/><rect x="1131" y="301" width="1" height="1"/><rect x="1178" y="803" width="1" height="1"/><rect x="1178" y="761" width="1" height="1"/><rect x="1178" y="719" width="1" height="1"/><rect x="1178" y="678" width="1" height="1"/><rect x="1178" y="636" width="1" height="1"/><rect x="1178" y="594" width="1" height="1"/><rect x="1178" y="552" width="1" height="1"/><rect x="1178" y="510" width="1" height="1"/><rect x="1178" y="468" width="1" height="1"/><rect x="1178" y="427" width="1" height="1"/><rect x="1178" y="385" width="1" height="1"/><rect x="1178" y="343" width="1" height="1"/><rect x="1178" y="301" width="1" height="1"/></g><rect x="573" y="292" width="1" height="515" fill="#222"/><rect x="573" y="511.2" width="1" height="40.8" fill="#e8d8c8"/><rect x="573" y="678.5" width="1" height="24.1" fill="#e8d8c8"/><rect x="68" y="291" width="1154" height="1" fill="#b4b4b4"/><rect x="69" y="292" width="1153" height="1" fill="#303030" opacity=".7"/><rect x="68" y="291" width="1" height="516" fill="#b8b8b8"/><rect x="69" y="291" width="1" height="516" fill="#6a6a6a"/><rect x="1221.5" y="292" width="1" height="516" fill="#e8e8e8"/><g fill="#000" shape-rendering="crispEdges"><rect x="60" y="803" width="8" height="1"/><rect x="63" y="782" width="5" height="1"/><rect x="60" y="761" width="8" height="1"/><rect x="63" y="740" width="5" height="1"/><rect x="60" y="719" width="8" height="1"/><rect x="63" y="698" width="5" height="1"/><rect x="60" y="678" width="8" height="1"/><rect x="63" y="657" width="5" height="1"/><rect x="60" y="636" width="8" height="1"/><rect x="63" y="615" width="5" height="1"/><rect x="60" y="594" width="8" height="1"/><rect x="63" y="573" width="5" height="1"/><rect x="60" y="552" width="8" height="1"/><rect x="63" y="531" width="5" height="1"/><rect x="60" y="510" width="8" height="1"/><rect x="63" y="489" width="5" height="1"/><rect x="60" y="468" width="8" height="1"/><rect x="63" y="447" width="5" height="1"/><rect x="60" y="427" width="8" height="1"/><rect x="63" y="406" width="5" height="1"/><rect x="60" y="385" width="8" height="1"/><rect x="63" y="364" width="5" height="1"/><rect x="60" y="343" width="8" height="1"/><rect x="63" y="322" width="5" height="1"/><rect x="60" y="301" width="8" height="1"/></g><rect x="70.5" y="809.5" width="1131" height="4" fill="#fff" stroke="#000" stroke-width="1"/><rect x="340" y="809" width="420" height="5" fill="#000" shape-rendering="crispEdges"/><g fill="#000" shape-rendering="crispEdges"><rect x="72" y="814" width="1" height="1"/><rect x="84" y="814" width="1" height="4"/><rect x="95" y="814" width="1" height="1"/><rect x="107" y="814" width="1" height="7"/><rect x="119" y="814" width="1" height="1"/><rect x="130" y="814" width="1" height="4"/><rect x="142" y="814" width="1" height="1"/><rect x="154" y="814" width="1" height="7"/><rect x="165" y="814" width="1" height="1"/><rect x="177" y="814" width="1" height="4"/><rect x="188" y="814" width="1" height="1"/><rect x="200" y="814" width="1" height="7"/><rect x="212" y="814" width="1" height="1"/><rect x="223" y="814" width="1" height="4"/><rect x="235" y="814" width="1" height="1"/><rect x="247" y="814" width="1" height="7"/><rect x="258" y="814" width="1" height="1"/><rect x="270" y="814" width="1" height="4"/><rect x="282" y="814" width="1" height="1"/><rect x="293" y="814" width="1" height="7"/><rect x="305" y="814" width="1" height="1"/><rect x="317" y="814" width="1" height="4"/><rect x="328" y="814" width="1" height="1"/><rect x="340" y="814" width="1" height="7"/><rect x="351" y="814" width="1" height="1"/><rect x="363" y="814" width="1" height="4"/><rect x="375" y="814" width="1" height="1"/><rect x="386" y="814" width="1" height="7"/><rect x="398" y="814" width="1" height="1"/><rect x="410" y="814" width="1" height="4"/><rect x="421" y="814" width="1" height="1"/><rect x="433" y="814" width="1" height="7"/><rect x="445" y="814" width="1" height="1"/><rect x="456" y="814" width="1" height="4"/><rect x="468" y="814" width="1" height="1"/><rect x="480" y="814" width="1" height="7"/><rect x="491" y="814" width="1" height="1"/><rect x="503" y="814" width="1" height="4"/><rect x="514" y="814" width="1" height="1"/><rect x="526" y="814" width="1" height="7"/><rect x="538" y="814" width="1" height="1"/><rect x="549" y="814" width="1" height="4"/><rect x="561" y="814" width="1" height="1"/><rect x="573" y="814" width="1" height="7"/><rect x="584" y="814" width="1" height="1"/><rect x="596" y="814" width="1" height="4"/><rect x="608" y="814" width="1" height="1"/><rect x="619" y="814" width="1" height="7"/><rect x="631" y="814" width="1" height="1"/><rect x="642" y="814" width="1" height="4"/><rect x="654" y="814" width="1" height="1"/><rect x="666" y="814" width="1" height="7"/><rect x="677" y="814" width="1" height="1"/><rect x="689" y="814" width="1" height="4"/><rect x="701" y="814" width="1" height="1"/><rect x="712" y="814" width="1" height="7"/><rect x="724" y="814" width="1" height="1"/><rect x="736" y="814" width="1" height="4"/><rect x="747" y="814" width="1" height="1"/><rect x="759" y="814" width="1" height="7"/><rect x="771" y="814" width="1" height="1"/><rect x="782" y="814" width="1" height="4"/><rect x="794" y="814" width="1" height="1"/><rect x="805" y="814" width="1" height="7"/><rect x="817" y="814" width="1" height="1"/><rect x="829" y="814" width="1" height="4"/><rect x="840" y="814" width="1" height="1"/><rect x="852" y="814" width="1" height="7"/><rect x="864" y="814" width="1" height="1"/><rect x="875" y="814" width="1" height="4"/><rect x="887" y="814" width="1" height="1"/><rect x="899" y="814" width="1" height="7"/><rect x="910" y="814" width="1" height="1"/><rect x="922" y="814" width="1" height="4"/><rect x="934" y="814" width="1" height="1"/><rect x="945" y="814" width="1" height="7"/><rect x="957" y="814" width="1" height="1"/><rect x="968" y="814" width="1" height="4"/><rect x="980" y="814" width="1" height="1"/><rect x="992" y="814" width="1" height="7"/><rect x="1003" y="814" width="1" height="1"/><rect x="1015" y="814" width="1" height="4"/><rect x="1027" y="814" width="1" height="1"/><rect x="1038" y="814" width="1" height="7"/><rect x="1050" y="814" width="1" height="1"/><rect x="1062" y="814" width="1" height="4"/><rect x="1073" y="814" width="1" height="1"/><rect x="1085" y="814" width="1" height="7"/><rect x="1097" y="814" width="1" height="1"/><rect x="1108" y="814" width="1" height="4"/><rect x="1120" y="814" width="1" height="1"/><rect x="1131" y="814" width="1" height="7"/><rect x="1143" y="814" width="1" height="1"/><rect x="1155" y="814" width="1" height="4"/><rect x="1166" y="814" width="1" height="1"/><rect x="1178" y="814" width="1" height="7"/><rect x="1190" y="814" width="1" height="1"/><rect x="1201" y="814" width="1" height="4"/></g></svg>
<!-- right panel -->
<div class="a" style="left:1224px;top:282px;width:213px;height:566px;border:1px solid;border-color:#fff #707070 #707070 #fff;box-shadow:inset -1px -1px 0 #a0a0a0"></div>
<div class="a" style="left:1268px;top:264px;width:65px;height:18px;border:1px solid;border-color:#fff #696969 transparent #f0f0f0;box-shadow:inset -1px 0 0 #a0a0a0;border-bottom:none"></div>
<div class="a" style="left:1224px;top:262px;width:45px;height:21px;background:#f0f0f0;border:1px solid;border-color:#fff #696969 #f0f0f0 #fff;box-shadow:inset -1px 0 0 #a0a0a0;border-bottom:none"></div>
<div class="a grp" style="left:1243px;top:298px;width:175px;height:203px"></div>
<div class="a" style="left:1249px;top:294px;width:87px;height:12px;background:#f0f0f0"></div>
<div class="a btn" style="left:1251px;top:317px;width:161px;height:25px"></div>
<div class="a btn" style="left:1251px;top:349px;width:161px;height:25px"></div>
<div class="a btn" style="left:1251px;top:381px;width:161px;height:25px"></div>
<div class="a sunk" style="left:1251px;top:413px;width:161px;height:80px"></div>
<div class="a grp" style="left:1241px;top:725px;width:177px;height:85px"></div>
<div class="a" style="left:1247px;top:720px;width:46px;height:12px;background:#f0f0f0"></div>
<div class="a" style="left:1248px;top:746px;width:15px;height:3px;background:#000000"></div>
<div class="a" style="left:1248px;top:759px;width:15px;height:3px;background:#000080"></div>
<div class="a" style="left:1248px;top:772px;width:15px;height:3px;background:#804000"></div>
<div class="a" style="left:1248px;top:785px;width:15px;height:3px;background:#e00000"></div>
<div class="a" style="left:1248px;top:798px;width:15px;height:3px;background:#008000"></div>
<!-- bottom -->
<div class="a" style="left:73px;top:849px;width:1365px;height:2px;background:#696969;border-bottom:1px solid #a0a0a0;box-sizing:border-box"></div>
<div class="a" style="left:1438px;top:113px;width:1px;height:738px;background:#707070"></div><div class="a" style="left:1437px;top:113px;width:1px;height:738px;background:#b0b0b0"></div><div class="a" style="left:1439px;top:22px;width:1px;height:876px;background:#e4e8f0"></div>
<div class="a" style="left:1px;top:113px;width:1px;height:756px;background:#fff"></div>
<div class="a" style="left:1px;top:849px;width:73px;height:22px;border:1px solid;border-color:transparent #696969 #696969 #fff;border-top:none;box-shadow:inset -1px -1px 0 #a0a0a0"></div>
<div class="a" style="left:75px;top:851px;width:79px;height:18px;border:1px solid;border-color:transparent #696969 #696969 #e8e8e8;border-top:none;box-shadow:inset -1px -1px 0 #a0a0a0"></div>
<div class="a" style="left:156px;top:851px;width:87px;height:18px;border:1px solid;border-color:transparent #696969 #696969 #e8e8e8;border-top:none;box-shadow:inset -1px -1px 0 #a0a0a0"></div>
<div class="a" style="left:246px;top:851px;width:54px;height:18px;border:1px solid;border-color:transparent #696969 #696969 #e8e8e8;border-top:none;box-shadow:inset -1px -1px 0 #a0a0a0"></div>
<div class="a" style="left:302px;top:851px;width:100px;height:18px;border:1px solid;border-color:transparent #696969 #696969 #e8e8e8;border-top:none;box-shadow:inset -1px -1px 0 #a0a0a0"></div>
<div class="a" style="left:404px;top:851px;width:83px;height:18px;border:1px solid;border-color:transparent #696969 #696969 #e8e8e8;border-top:none;box-shadow:inset -1px -1px 0 #a0a0a0"></div>
<div class="a sbp" style="left:1px;width:146px"></div>
<div class="a sbp" style="left:149px;width:68px"></div>
<div class="a sbp" style="left:219px;width:64px"></div>
<div class="a sbp" style="left:285px;width:1153px"></div>
<div class="a" style="left:2px;top:876px;width:144px;height:20px;overflow:hidden;will-change:transform"><span class="t" style="left:0.300px;top:5.400px;font-size:12px;line-height:12px;transform:scaleX(0.9822)">Sample 3 - Study comparison</span></div>
<div class="a hl" style="top:897px;background:#1c2c4c"></div>
<div class="a hl" style="top:898px;height:2px;background:linear-gradient(90deg,#6a8cc4,#4a70b4 20%,#7a9ad0 37%,#4a70b4 50%,#6a8cc4 70%,#4a70b4 94%,#9ab0d8 96%)"></div>
<!-- texts -->
<div id="txt" class="a" style="left:0;top:0;width:1440px;height:900px;will-change:transform">
<span class="t" style="left:21.41px;top:5.34px;font-size:12px;line-height:12px;letter-spacing:-0.065px;color:#000;text-shadow:0 0 7px #fff,0 0 7px #fff,0 0 6px #fff,0 0 5px #fff,0 0 4px #fff,0 0 3px #fff;">AccuWin Pro v3 – narzędzia monitorowania ABP</span>
<span class="t" style="left:7.20px;top:25.64px;font-size:12px;line-height:12px;letter-spacing:-0.048px;color:#000;">Plik</span>
<span class="t" style="left:39.40px;top:25.64px;font-size:12px;line-height:12px;transform:scaleX(1.0996);color:#000;">Monitor</span>
<span class="t" style="left:96.40px;top:25.64px;font-size:12px;line-height:12px;letter-spacing:-0.006px;color:#000;">Raport</span>
<span class="t" style="left:145.40px;top:25.64px;font-size:12px;line-height:12px;letter-spacing:0.273px;color:#000;">Konfiguruj</span>
<span class="t" style="left:215.40px;top:25.64px;font-size:12px;line-height:12px;letter-spacing:0.410px;color:#000;">Pomoc</span>
<span class="t" style="left:14.00px;top:90.67px;font-size:9.6px;line-height:9.6px;letter-spacing:0.079px;color:#000;-webkit-text-stroke:0.25px #000;">Progra<u>m</u>uj</span>
<span class="t" style="left:86.41px;top:90.67px;font-size:9.6px;line-height:9.6px;letter-spacing:-0.089px;color:#000;-webkit-text-stroke:0.25px #000;">Pob<u>i</u>erz</span>
<span class="t" style="left:141.40px;top:90.67px;font-size:9.6px;line-height:9.6px;letter-spacing:0.217px;color:#000;-webkit-text-stroke:0.25px #000;">Dane <u>A</u>BPM</span>
<span class="t" style="left:208.32px;top:90.67px;font-size:9.6px;line-height:9.6px;letter-spacing:-0.143px;color:#000;-webkit-text-stroke:0.25px #000;">Podgl. druku</span>
<span class="t" style="left:286.81px;top:90.67px;font-size:9.6px;line-height:9.6px;letter-spacing:-0.087px;color:#000;-webkit-text-stroke:0.25px #000;"><u>D</u>rukuj</span>
<span class="t" style="left:338.41px;top:90.67px;font-size:9.6px;line-height:9.6px;letter-spacing:-0.097px;color:#000;-webkit-text-stroke:0.25px #000;">Drukuj <u>s</u>tronę</span>
<span class="t" style="left:422.40px;top:90.67px;font-size:9.6px;line-height:9.6px;letter-spacing:0.406px;color:#000;-webkit-text-stroke:0.25px #000;">PDF</span>
<span class="t" style="left:481.60px;top:90.67px;font-size:9.6px;line-height:9.6px;transform:scaleX(1.1186);color:#000;-webkit-text-stroke:0.25px #000;"><u>P</u>omoc</span>
<span class="t" style="left:552.95px;top:90.67px;font-size:9.6px;line-height:9.6px;transform:scaleX(0.9176);color:#000;-webkit-text-stroke:0.25px #000;"><u>W</u>yjdź</span>
<span class="t" style="left:8.85px;top:128.84px;font-size:12px;line-height:12px;transform:scaleX(0.9161);color:#000;-webkit-text-stroke:0.18px #000;">Znacznik</span>
<span class="t" style="left:62.64px;top:128.84px;font-size:12px;line-height:12px;transform:scaleX(0.9254);color:#000;-webkit-text-stroke:0.18px #000;">Liczba</span>
<span class="t" style="left:118.09px;top:128.84px;font-size:12px;line-height:12px;transform:scaleX(0.8568);color:#000;-webkit-text-stroke:0.18px #000;">Sys.</span>
<span class="t" style="left:168.66px;top:128.84px;font-size:12px;line-height:12px;transform:scaleX(0.8949);color:#000;-webkit-text-stroke:0.18px #000;">Dia.</span>
<span class="t" style="left:221.16px;top:128.84px;font-size:12px;line-height:12px;transform:scaleX(0.8937);color:#000;-webkit-text-stroke:0.18px #000;">HR</span>
<span class="t" style="left:280.84px;top:128.84px;font-size:12px;line-height:12px;transform:scaleX(0.9385);color:#000;-webkit-text-stroke:0.18px #000;">Data</span>
<span class="t" style="left:351.87px;top:128.84px;font-size:12px;line-height:12px;transform:scaleX(0.8814);color:#000;-webkit-text-stroke:0.18px #000;">Czas</span>
<span class="t" style="left:420.87px;top:128.84px;font-size:12px;line-height:12px;transform:scaleX(0.8757);color:#000;-webkit-text-stroke:0.18px #000;">EC</span>
<span class="t" style="left:462.63px;top:128.84px;font-size:12px;line-height:12px;transform:scaleX(0.9443);color:#000;-webkit-text-stroke:0.18px #000;">Uwagi</span>
<span class="t" style="left:75.60px;top:150.59px;font-size:11px;line-height:11px;letter-spacing:0.550px;color:#000;">22</span>
<span class="t" style="left:119.10px;top:150.59px;font-size:11px;line-height:11px;letter-spacing:0.027px;color:#000;">118</span>
<span class="t" style="left:175.40px;top:150.59px;font-size:11px;line-height:11px;letter-spacing:0.550px;color:#000;">74</span>
<span class="t" style="left:225.10px;top:150.59px;font-size:11px;line-height:11px;letter-spacing:0.450px;color:#000;">76</span>
<span class="t" style="left:263.11px;top:150.59px;font-size:11px;line-height:11px;letter-spacing:-0.049px;color:#000;">26-sie-2005</span>
<span class="t" style="left:349.30px;top:150.59px;font-size:11px;line-height:11px;letter-spacing:0.267px;color:#000;">23:06</span>
<span class="t" style="left:75.60px;top:171.59px;font-size:11px;line-height:11px;letter-spacing:0.550px;color:#000;">23</span>
<span class="t" style="left:119.10px;top:171.59px;font-size:11px;line-height:11px;letter-spacing:0.027px;color:#000;">116</span>
<span class="t" style="left:175.40px;top:171.59px;font-size:11px;line-height:11px;letter-spacing:0.550px;color:#000;">70</span>
<span class="t" style="left:225.10px;top:171.59px;font-size:11px;line-height:11px;letter-spacing:0.450px;color:#000;">67</span>
<span class="t" style="left:263.11px;top:171.59px;font-size:11px;line-height:11px;letter-spacing:-0.049px;color:#000;">27-sie-2005</span>
<span class="t" style="left:349.30px;top:171.59px;font-size:11px;line-height:11px;letter-spacing:0.267px;color:#000;">00:03</span>
<span class="t" style="left:75.60px;top:192.59px;font-size:11px;line-height:11px;letter-spacing:0.550px;color:#000;">24</span>
<span class="t" style="left:119.10px;top:192.59px;font-size:11px;line-height:11px;letter-spacing:0.027px;color:#000;">114</span>
<span class="t" style="left:175.40px;top:192.59px;font-size:11px;line-height:11px;letter-spacing:0.550px;color:#000;">66</span>
<span class="t" style="left:225.10px;top:192.59px;font-size:11px;line-height:11px;letter-spacing:0.450px;color:#000;">62</span>
<span class="t" style="left:263.11px;top:192.59px;font-size:11px;line-height:11px;letter-spacing:-0.049px;color:#000;">27-sie-2005</span>
<span class="t" style="left:349.30px;top:192.59px;font-size:11px;line-height:11px;letter-spacing:0.267px;color:#000;">01:02</span>
<span class="t" style="left:75.60px;top:213.59px;font-size:11px;line-height:11px;letter-spacing:0.550px;color:#000;">25</span>
<span class="t" style="left:119.10px;top:213.59px;font-size:11px;line-height:11px;letter-spacing:0.027px;color:#000;">112</span>
<span class="t" style="left:175.40px;top:213.59px;font-size:11px;line-height:11px;letter-spacing:0.550px;color:#000;">60</span>
<span class="t" style="left:225.10px;top:213.59px;font-size:11px;line-height:11px;letter-spacing:0.450px;color:#000;">59</span>
<span class="t" style="left:263.11px;top:213.59px;font-size:11px;line-height:11px;letter-spacing:-0.049px;color:#000;">27-sie-2005</span>
<span class="t" style="left:349.30px;top:213.59px;font-size:11px;line-height:11px;letter-spacing:0.267px;color:#000;">01:58</span>
<span class="t" style="left:75.60px;top:234.59px;font-size:11px;line-height:11px;letter-spacing:0.550px;color:#fff;">26</span>
<span class="t" style="left:119.10px;top:234.59px;font-size:11px;line-height:11px;letter-spacing:0.027px;color:#fff;">110</span>
<span class="t" style="left:175.40px;top:234.59px;font-size:11px;line-height:11px;letter-spacing:0.550px;color:#fff;">74</span>
<span class="t" style="left:225.10px;top:234.59px;font-size:11px;line-height:11px;letter-spacing:0.450px;color:#fff;">82</span>
<span class="t" style="left:263.11px;top:234.59px;font-size:11px;line-height:11px;letter-spacing:-0.049px;color:#fff;">27-sie-2005</span>
<span class="t" style="left:349.30px;top:234.59px;font-size:11px;line-height:11px;letter-spacing:0.267px;color:#fff;">03:00</span>
<span class="t" style="left:28.07px;top:261.84px;font-size:12px;line-height:12px;transform:scaleX(0.8777);color:#000;-webkit-text-stroke:0.18px #000;">mmHg-uderz./min</span>
<span class="t" style="left:44.14px;top:797.84px;font-size:12px;line-height:12px;transform:scaleX(0.9282);color:#000;-webkit-text-stroke:0.18px #000;">50</span>
<span class="t" style="left:44.14px;top:756.01px;font-size:12px;line-height:12px;transform:scaleX(0.9282);color:#000;-webkit-text-stroke:0.18px #000;">60</span>
<span class="t" style="left:44.14px;top:714.18px;font-size:12px;line-height:12px;transform:scaleX(0.9282);color:#000;-webkit-text-stroke:0.18px #000;">70</span>
<span class="t" style="left:44.14px;top:672.34px;font-size:12px;line-height:12px;transform:scaleX(0.9282);color:#000;-webkit-text-stroke:0.18px #000;">80</span>
<span class="t" style="left:44.14px;top:630.51px;font-size:12px;line-height:12px;transform:scaleX(0.9282);color:#000;-webkit-text-stroke:0.18px #000;">90</span>
<span class="t" style="left:38.15px;top:588.68px;font-size:12px;line-height:12px;transform:scaleX(0.9186);color:#000;-webkit-text-stroke:0.18px #000;">100</span>
<span class="t" style="left:38.12px;top:546.84px;font-size:12px;line-height:12px;letter-spacing:-0.370px;color:#000;-webkit-text-stroke:0.18px #000;">110</span>
<span class="t" style="left:38.15px;top:505.01px;font-size:12px;line-height:12px;transform:scaleX(0.9186);color:#000;-webkit-text-stroke:0.18px #000;">120</span>
<span class="t" style="left:38.15px;top:463.18px;font-size:12px;line-height:12px;transform:scaleX(0.9186);color:#000;-webkit-text-stroke:0.18px #000;">130</span>
<span class="t" style="left:38.15px;top:421.34px;font-size:12px;line-height:12px;transform:scaleX(0.9186);color:#000;-webkit-text-stroke:0.18px #000;">140</span>
<span class="t" style="left:38.15px;top:379.51px;font-size:12px;line-height:12px;transform:scaleX(0.9186);color:#000;-webkit-text-stroke:0.18px #000;">150</span>
<span class="t" style="left:38.15px;top:337.68px;font-size:12px;line-height:12px;transform:scaleX(0.9186);color:#000;-webkit-text-stroke:0.18px #000;">160</span>
<span class="t" style="left:38.15px;top:295.84px;font-size:12px;line-height:12px;transform:scaleX(0.9186);color:#000;-webkit-text-stroke:0.18px #000;">170</span>
<span class="t" style="left:101.35px;top:825.04px;font-size:12px;line-height:12px;transform:scaleX(0.9132);color:#000;-webkit-text-stroke:0.18px #000;">17</span>
<span class="t" style="left:147.92px;top:825.04px;font-size:12px;line-height:12px;transform:scaleX(0.9132);color:#000;-webkit-text-stroke:0.18px #000;">18</span>
<span class="t" style="left:194.48px;top:825.04px;font-size:12px;line-height:12px;transform:scaleX(0.9132);color:#000;-webkit-text-stroke:0.18px #000;">19</span>
<span class="t" style="left:241.05px;top:825.04px;font-size:12px;line-height:12px;transform:scaleX(0.9132);color:#000;-webkit-text-stroke:0.18px #000;">20</span>
<span class="t" style="left:287.61px;top:825.04px;font-size:12px;line-height:12px;transform:scaleX(0.9132);color:#000;-webkit-text-stroke:0.18px #000;">21</span>
<span class="t" style="left:334.18px;top:825.04px;font-size:12px;line-height:12px;transform:scaleX(0.9132);color:#000;-webkit-text-stroke:0.18px #000;">22</span>
<span class="t" style="left:380.74px;top:825.04px;font-size:12px;line-height:12px;transform:scaleX(0.9132);color:#000;-webkit-text-stroke:0.18px #000;">23</span>
<span class="t" style="left:430.42px;top:825.04px;font-size:12px;line-height:12px;transform:scaleX(0.8972);color:#000;-webkit-text-stroke:0.18px #000;">0</span>
<span class="t" style="left:476.98px;top:825.04px;font-size:12px;line-height:12px;transform:scaleX(0.8972);color:#000;-webkit-text-stroke:0.18px #000;">1</span>
<span class="t" style="left:523.55px;top:825.04px;font-size:12px;line-height:12px;transform:scaleX(0.8972);color:#000;-webkit-text-stroke:0.18px #000;">2</span>
<span class="t" style="left:570.11px;top:825.04px;font-size:12px;line-height:12px;transform:scaleX(0.8972);color:#000;-webkit-text-stroke:0.18px #000;">3</span>
<span class="t" style="left:616.68px;top:825.04px;font-size:12px;line-height:12px;transform:scaleX(0.8972);color:#000;-webkit-text-stroke:0.18px #000;">4</span>
<span class="t" style="left:663.24px;top:825.04px;font-size:12px;line-height:12px;transform:scaleX(0.8972);color:#000;-webkit-text-stroke:0.18px #000;">5</span>
<span class="t" style="left:709.81px;top:825.04px;font-size:12px;line-height:12px;transform:scaleX(0.8972);color:#000;-webkit-text-stroke:0.18px #000;">6</span>
<span class="t" style="left:756.37px;top:825.04px;font-size:12px;line-height:12px;transform:scaleX(0.8972);color:#000;-webkit-text-stroke:0.18px #000;">7</span>
<span class="t" style="left:802.94px;top:825.04px;font-size:12px;line-height:12px;transform:scaleX(0.8972);color:#000;-webkit-text-stroke:0.18px #000;">8</span>
<span class="t" style="left:849.50px;top:825.04px;font-size:12px;line-height:12px;transform:scaleX(0.8972);color:#000;-webkit-text-stroke:0.18px #000;">9</span>
<span class="t" style="left:892.96px;top:825.04px;font-size:12px;line-height:12px;transform:scaleX(0.9132);color:#000;-webkit-text-stroke:0.18px #000;">10</span>
<span class="t" style="left:939.48px;top:825.04px;font-size:12px;line-height:12px;letter-spacing:-0.269px;color:#000;-webkit-text-stroke:0.18px #000;">11</span>
<span class="t" style="left:986.09px;top:825.04px;font-size:12px;line-height:12px;transform:scaleX(0.9132);color:#000;-webkit-text-stroke:0.18px #000;">12</span>
<span class="t" style="left:1032.65px;top:825.04px;font-size:12px;line-height:12px;transform:scaleX(0.9132);color:#000;-webkit-text-stroke:0.18px #000;">13</span>
<span class="t" style="left:1079.22px;top:825.04px;font-size:12px;line-height:12px;transform:scaleX(0.9132);color:#000;-webkit-text-stroke:0.18px #000;">14</span>
<span class="t" style="left:1125.78px;top:825.04px;font-size:12px;line-height:12px;transform:scaleX(0.9132);color:#000;-webkit-text-stroke:0.18px #000;">15</span>
<span class="t" style="left:1172.35px;top:825.04px;font-size:12px;line-height:12px;transform:scaleX(0.9132);color:#000;-webkit-text-stroke:0.18px #000;">16</span>
<span class="t" style="left:601.49px;top:837.14px;font-size:12px;line-height:12px;transform:scaleX(0.8521);color:#000;-webkit-text-stroke:0.18px #000;">Czas</span>
<span class="t" style="left:1231.07px;top:265.04px;font-size:12px;line-height:12px;transform:scaleX(0.8872);color:#000;-webkit-text-stroke:0.18px #000;">Próg</span>
<span class="t" style="left:1273.06px;top:266.84px;font-size:12px;line-height:12px;transform:scaleX(0.8945);color:#000;-webkit-text-stroke:0.18px #000;">Okno czas.</span>
<span class="t" style="left:1250.96px;top:293.84px;font-size:12px;line-height:12px;transform:scaleX(0.8952);color:#000;-webkit-text-stroke:0.18px #000;">Ustawienia progu</span>
<span class="t" style="left:1304.07px;top:322.84px;font-size:12px;line-height:12px;transform:scaleX(0.8805);color:#000;-webkit-text-stroke:0.18px #000;">Edytuj progi</span>
<span class="t" style="left:1269.06px;top:354.84px;font-size:12px;line-height:12px;transform:scaleX(0.9046);color:#000;-webkit-text-stroke:0.18px #000;">Edytuj czas snu/czuwania</span>
<span class="t" style="left:1287.97px;top:386.84px;font-size:12px;line-height:12px;transform:scaleX(0.8794);color:#000;-webkit-text-stroke:0.18px #000;">Progi pediatryczne</span>
<span class="t" style="left:1258.46px;top:421.84px;font-size:12px;line-height:12px;transform:scaleX(0.8957);color:#000;-webkit-text-stroke:0.18px #000;">Aktualne ustawienia:</span>
<span class="t" style="left:1258.95px;top:453.84px;font-size:12px;line-height:12px;transform:scaleX(0.9100);color:#000;-webkit-text-stroke:0.18px #000;">Okres czuw. 174/90 mmHg</span>
<span class="t" style="left:1258.96px;top:469.84px;font-size:12px;line-height:12px;transform:scaleX(0.8996);color:#000;-webkit-text-stroke:0.18px #000;">Okres snu 120/80 mmHg</span>
<span class="t" style="left:1248.85px;top:719.84px;font-size:12px;line-height:12px;transform:scaleX(0.9118);color:#000;-webkit-text-stroke:0.18px #000;">Legenda</span>
<span class="t" style="left:1268.19px;top:742.24px;font-size:12px;line-height:12px;transform:scaleX(0.8561);color:#000;-webkit-text-stroke:0.18px #000;">Ciśnienie tętn.</span>
<span class="t" style="left:1268.18px;top:755.24px;font-size:12px;line-height:12px;transform:scaleX(0.8611);color:#000;-webkit-text-stroke:0.18px #000;">Częstość rytmu</span>
<span class="t" style="left:1268.17px;top:768.24px;font-size:12px;line-height:12px;transform:scaleX(0.8872);color:#000;-webkit-text-stroke:0.18px #000;">Próg</span>
<span class="t" style="left:1268.17px;top:781.24px;font-size:12px;line-height:12px;transform:scaleX(0.8848);color:#000;-webkit-text-stroke:0.18px #000;">BP powyżej progu</span>
<span class="t" style="left:1268.17px;top:794.24px;font-size:12px;line-height:12px;transform:scaleX(0.8806);color:#000;-webkit-text-stroke:0.18px #000;">BP poniżej progu</span>
<span class="t" style="left:7.96px;top:856.14px;font-size:12px;line-height:12px;transform:scaleX(0.9025);color:#000;-webkit-text-stroke:0.18px #000;">Dane ABPM</span>
<span class="t" style="left:78.65px;top:854.04px;font-size:12px;line-height:12px;transform:scaleX(0.9148);color:#000;-webkit-text-stroke:0.18px #000;">Dane pacjenta</span>
<span class="t" style="left:160.96px;top:854.04px;font-size:12px;line-height:12px;transform:scaleX(0.8937);color:#000;-webkit-text-stroke:0.18px #000;">Dane medyczne</span>
<span class="t" style="left:250.06px;top:854.04px;font-size:12px;line-height:12px;transform:scaleX(0.8918);color:#000;-webkit-text-stroke:0.18px #000;">Statystyki</span>
<span class="t" style="left:306.97px;top:854.04px;font-size:12px;line-height:12px;transform:scaleX(0.8866);color:#000;-webkit-text-stroke:0.18px #000;">Średnie godzinowe</span>
<span class="t" style="left:409.07px;top:854.04px;font-size:12px;line-height:12px;transform:scaleX(0.8859);color:#000;-webkit-text-stroke:0.18px #000;">Podsumowanie</span>
<span class="t" style="left:150.43px;top:881.44px;font-size:12px;line-height:12px;transform:scaleX(0.9433);color:#000;">003-00-0000</span>
<span class="t" style="left:220.73px;top:881.44px;font-size:12px;line-height:12px;transform:scaleX(0.9452);color:#000;">26-sie-2005</span>
<span class="t" style="left:286.11px;top:881.44px;font-size:12px;line-height:12px;letter-spacing:-0.064px;color:#000;">C:\AWPv3 Polish\Sample Comparison.awp</span>
</div>
</body></html>
